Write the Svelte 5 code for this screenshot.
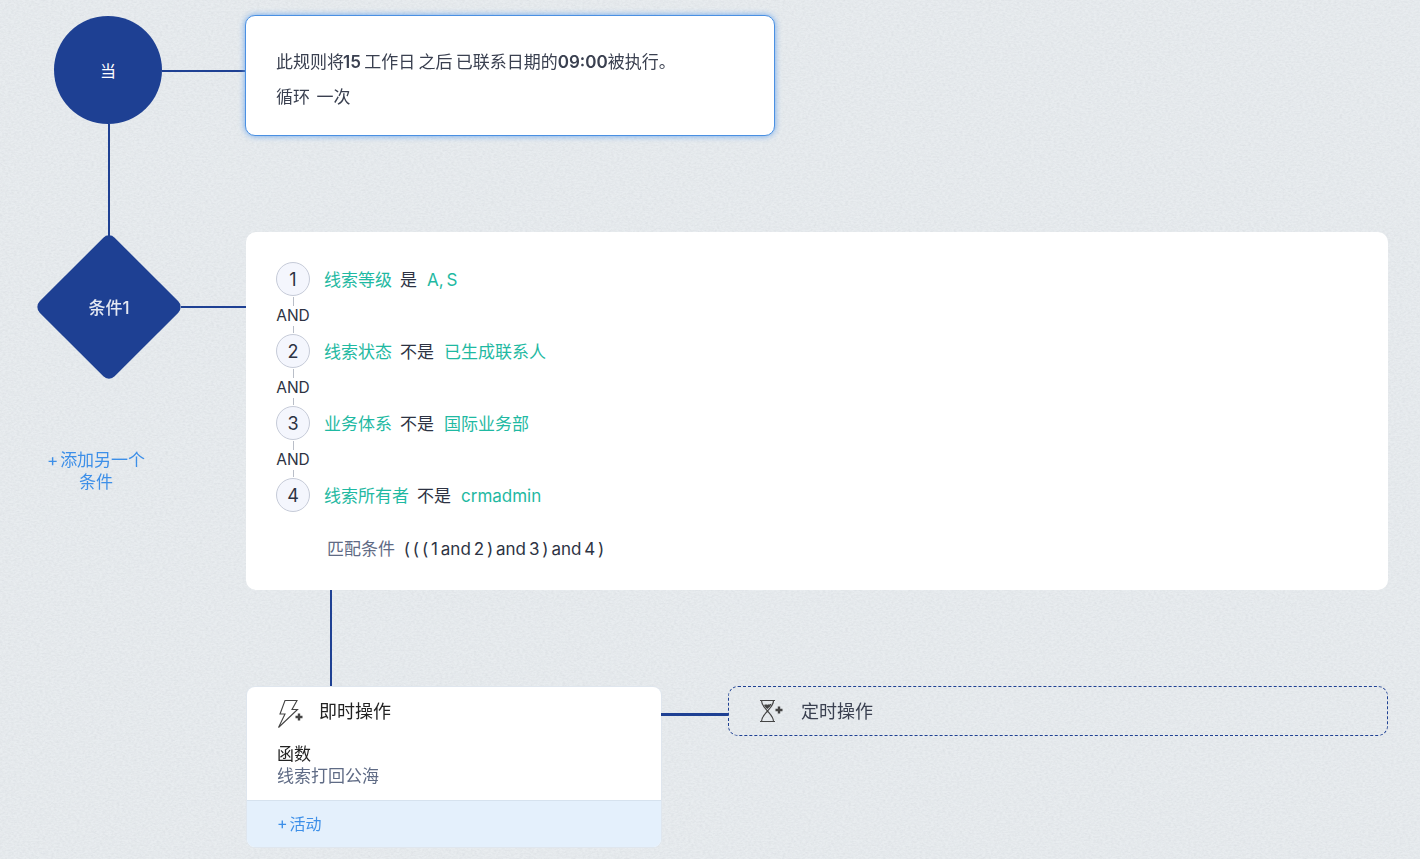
<script lang="ts">
  const conditions = [
    { n: 1, field: "线索等级", op: "是", value: "A, S" },
    { n: 2, field: "线索状态", op: "不是", value: "已生成联系人" },
    { n: 3, field: "业务体系", op: "不是", value: "国际业务部" },
    { n: 4, field: "线索所有者", op: "不是", value: "crmadmin" },
  ];
</script>

<svg class="grain" aria-hidden="true">
  <filter id="paper">
    <feTurbulence type="fractalNoise" baseFrequency="0.35 0.6" numOctaves="3" seed="4" />
    <feColorMatrix values="0 0 0 0 0.55  0 0 0 0 0.58  0 0 0 0 0.62  0.35 0.35 0 0 -0.27" />
  </filter>
  <rect width="100%" height="100%" filter="url(#paper)" />
</svg>

<div class="flow">
  <section class="row when-row">
    <div class="node-col">
      <div class="circle">当</div>
    </div>
    <div class="when-card">
      <p>此规则将<b class="count">15</b> 工作日 之后 已联系日期的<b>09:00</b>被执行。</p>
      <p>循环 &nbsp;一次</p>
    </div>
  </section>

  <section class="row cond-row">
    <div class="node-col">
      <div class="diamond"><span>条件1</span></div>
      <div class="add-cond"><span class="plus">+</span>添加另一个<br />条件</div>
    </div>
    <div class="cond-card">
      {#each conditions as c, i}
        {#if i > 0}
          <div class="and"><span>AND</span></div>
        {/if}
        <div class="cond">
          <span class="num">{c.n}</span>
          <span class="teal field">{c.field}</span>
          <span class="op">{c.op}</span>
          <span class="teal value">{c.value}</span>
        </div>
      {/each}
      <div class="match">
        <span class="match-label">匹配条件</span>
        <span class="match-expr">( ( ( 1 and 2 ) and 3 ) and 4 )</span>
      </div>
    </div>
  </section>

  <section class="row action-row">
    <div class="instant">
      <div class="instant-body">
        <div class="action-head">
          <svg width="26" height="30" viewBox="0 0 26 30" fill="none" stroke="#444" stroke-width="1.1">
            <path d="M8 1.5H20L15 10.5H20.5L1.5 28.5L8 15H3Z" />
            <path d="M18.5 18h7M22 14.5v7" stroke-width="2.4" />
          </svg>
          <span>即时操作</span>
        </div>
        <div class="fn-title">函数</div>
        <div class="fn-name">线索打回公海</div>
      </div>
      <div class="add-activity"><span class="plus">+</span>活动</div>
    </div>
    <div class="scheduled">
      <svg width="24" height="24" viewBox="0 0 24 24" fill="none" stroke="#444" stroke-width="1.2">
        <path d="M1 1.5H16M1 22.5H16M2.5 1.5C2.5 6 5.5 8.5 8.5 12C11.5 8.5 14.5 6 14.5 1.5M2.5 22.5C2.5 18 5.5 15.5 8.5 12C11.5 15.5 14.5 18 14.5 22.5" />
        <path d="M5 6C7 5 9.5 6.5 12.5 4.5C12 7 10 8.5 8.5 10C7 9 5.5 7.5 5 6Z" fill="#444" stroke="none" />
        <path d="M16.5 11h7M20 7.5v7" stroke-width="2.4" />
      </svg>
      <span>定时操作</span>
    </div>
  </section>
</div>

<style>
  :global(body) {
    margin: 0;
    background: #e8ecef;
    font-family: Inter, "Noto Sans CJK SC", sans-serif;
    color: #2d3343;
    overflow: hidden;
  }

  :global(*) {
    box-sizing: border-box;
  }

  .grain {
    position: fixed;
    inset: 0;
    width: 100%;
    height: 100%;
    pointer-events: none;
  }

  .flow {
    position: relative;
    height: 859px;
    padding: 15px 32px 0 0;
    font-size: 17px;
  }

  .row {
    display: flex;
    position: relative;
  }

  .node-col {
    width: 245px;
    flex-shrink: 0;
    position: relative;
  }

  .circle {
    width: 108px;
    height: 108px;
    margin: 1px 0 0 54px;
    border-radius: 50%;
    background: #1e4093;
    color: #fff;
    font-size: 16px;
    display: flex;
    align-items: center;
    justify-content: center;
    position: relative;
  }

  /* connector to the rule card */
  .circle::after {
    content: "";
    position: absolute;
    left: 108px;
    top: 54px;
    width: 83px;
    height: 2px;
    background: #1e4093;
  }

  /* connector down to the diamond */
  .circle::before {
    content: "";
    position: absolute;
    left: 54px;
    top: 108px;
    width: 2px;
    height: 112px;
    background: #1e4093;
  }

  .when-card {
    width: 530px;
    height: 121px;
    padding: 34px 30px 0;
    background: #fff;
    border: 1px solid #4a90e2;
    border-radius: 10px;
    box-shadow: 0 0 6px #6aa5ec;
    position: relative;
  }

  .when-card p {
    margin: 0 0 11px;
    line-height: 24px;
    color: #3a4050;
    white-space: nowrap;
    word-spacing: -1.5px;
  }

  .when-card b {
    font-weight: 600;
  }

  .when-card .count {
    margin-left: -1px;
  }

  .cond-row {
    margin-top: 96px;
  }

  .diamond {
    position: absolute;
    left: 56px;
    top: 22px;
    width: 106px;
    height: 106px;
    transform: rotate(45deg);
    background: #1e4093;
    border-radius: 8px;
  }

  .diamond span {
    position: absolute;
    inset: 0;
    padding-bottom: 2px;
    display: flex;
    align-items: center;
    justify-content: center;
    transform: rotate(-45deg);
    color: #e4e8f2;
    font-weight: 500;
    font-size: 17px;
  }

  /* connector from the diamond to the card */
  .node-col:has(.diamond)::after {
    content: "";
    position: absolute;
    left: 181px;
    top: 74px;
    width: 65px;
    height: 2px;
    background: #1e4093;
  }

  .add-cond {
    position: absolute;
    left: 42px;
    top: 217px;
    width: 108px;
    text-align: center;
    color: #3d8fe8;
    line-height: 22px;
    white-space: nowrap;
  }

  .plus {
    margin-right: 2px;
  }

  .cond-card {
    margin-left: 1px;
    flex: 1;
    height: 358px;
    padding: 29px 30px 0;
    background: #fff;
    border-radius: 10px;
    position: relative;
  }

  /* connector down to the instant action */
  .cond-card::after {
    content: "";
    position: absolute;
    left: 84px;
    top: 358px;
    width: 2px;
    height: 97px;
    background: #1e4093;
  }

  .cond {
    display: flex;
    align-items: center;
    height: 36px;
    line-height: 24px;
    white-space: nowrap;
  }

  .field,
  .op,
  .value {
    margin-top: 2px;
  }

  .num {
    width: 34px;
    height: 34px;
    margin-right: 14px;
    padding-top: 1px;
    flex-shrink: 0;
    border: 1px solid #c6cbd8;
    border-radius: 50%;
    background: #f4f6fd;
    display: flex;
    align-items: center;
    justify-content: center;
    font-size: 18px;
  }

  .teal {
    color: #1fb9a2;
  }

  .value {
    word-spacing: -2px;
  }

  .op {
    margin-right: 10px;
    margin-left: 8px;
  }

  /* rail between the numbered circles, hidden behind the label */
  .and {
    width: 34px;
    height: 36px;
    display: flex;
    align-items: center;
    justify-content: center;
    font-size: 15.5px;
    background: linear-gradient(#b9bec8, #b9bec8) center / 1px 100% no-repeat;
  }

  .and span {
    background: #fff;
    line-height: 20px;
    margin-top: 2px;
  }

  .match {
    margin: 24px 0 0 51px;
    line-height: 24px;
    white-space: nowrap;
  }

  .match-label {
    color: #5f6b85;
    margin-right: 4px;
  }

  .match-expr {
    word-spacing: -1.9px;
  }

  .action-row {
    margin-top: 96px;
    padding-left: 247px;
    align-items: flex-start;
  }

  .instant {
    width: 414px;
    height: 160px;
    margin-top: 1px;
    background: #fff;
    border-radius: 8px;
    overflow: hidden;
    flex-shrink: 0;
    box-shadow: 0 0 0 1px #dfe6ee;
    display: flex;
    flex-direction: column;
  }

  .instant-body {
    flex: 1;
    padding: 12px 30px 0;
  }

  .action-head {
    display: flex;
    align-items: center;
    height: 30px;
    gap: 16px;
    font-size: 18px;
    color: #222;
  }

  .action-head span {
    margin-top: -8px;
  }

  .fn-title {
    margin-top: 14px;
    line-height: 22px;
    color: #222;
  }

  .fn-name {
    line-height: 23px;
    color: #5f6b85;
  }

  .add-activity {
    height: 47px;
    padding: 0 30px 2px;
    display: flex;
    align-items: center;
    font-size: 16px;
    color: #3d8fe8;
    background: #e4f0fc;
    border-top: 1px solid #d6e2ee;
  }

  .scheduled {
    margin-left: 67px;
    flex: 1;
    height: 50px;
    padding-left: 30px;
    display: flex;
    align-items: center;
    gap: 18px;
    border: 1px dashed #1e4093;
    border-radius: 10px;
    position: relative;
    font-size: 18px;
    color: #3a4050;
  }

  .scheduled span {
    margin-top: -2px;
  }

  .scheduled::before {
    content: "";
    position: absolute;
    left: -68px;
    top: 26px;
    width: 67px;
    height: 3px;
    background: #1e4093;
  }
</style>
